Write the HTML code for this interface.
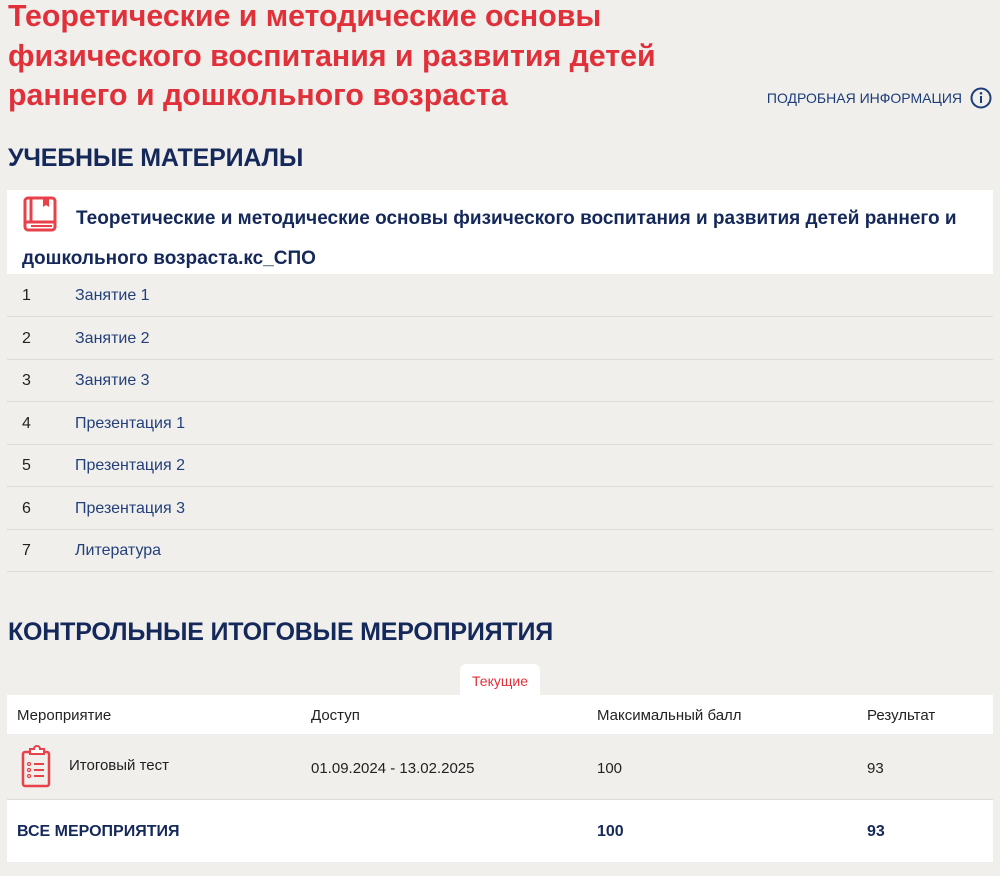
<!DOCTYPE html>
<html><head><meta charset="utf-8"><style>
*{margin:0;padding:0;box-sizing:border-box}
body{width:1000px;height:876px;background:#f0efec;font-family:"Liberation Sans",sans-serif;position:relative;overflow:hidden;color:#222}
.t{position:absolute;left:8px;top:-3px;color:#e0313b;font-weight:bold;font-size:30.3px;line-height:39.5px;width:680px}
.info{position:absolute;right:8px;top:87px;color:#1c3d78;font-size:14px;display:flex;align-items:center;gap:8px}
h2{position:absolute;left:8px;color:#15285a;font-size:25px;font-weight:bold;letter-spacing:-0.2px}
.card{position:absolute;left:7px;width:986px;top:190px;height:84px;background:#fff;color:#15285a;font-weight:bold;font-size:19px;line-height:40px;padding:6px 14px 0 15px}
.row{position:absolute;left:7px;width:986px;height:43px;border-bottom:1px solid #dcdbd8;font-size:16px;line-height:43px}
.row span{position:absolute;left:15px}
.row a{position:absolute;left:68px;color:#23407a;text-decoration:none}
.tab{position:absolute;left:460px;top:664px;width:80px;height:32px;background:#fff;border-radius:6px 6px 0 0;color:#e0313b;font-size:14px;text-align:center;line-height:34px}
.tr{position:absolute;left:7px;width:986px;font-size:15px}
.tr div{position:absolute}
</style></head><body>
<div class="t">Теоретические и методические основы физического воспитания и развития детей раннего и дошкольного возраста</div>
<div class="info">ПОДРОБНАЯ ИНФОРМАЦИЯ <svg width="22" height="22" viewBox="0 0 22 22"><circle cx="11" cy="11" r="9.5" fill="none" stroke="#1c3d78" stroke-width="2"/><rect x="10" y="9" width="2" height="7" fill="#1c3d78"/><circle cx="11" cy="6.3" r="1.3" fill="#1c3d78"/></svg></div>
<h2 style="top:144px">УЧЕБНЫЕ МАТЕРИАЛЫ</h2>
<div class="card"><svg width="36" height="36" viewBox="0 0 36 36" style="vertical-align:-8px;margin-right:18px"><rect x="3" y="2" width="30" height="32" rx="3" fill="none" stroke="#e8414a" stroke-width="3"/><line x1="9" y1="2" x2="9" y2="26" stroke="#e8414a" stroke-width="3"/><line x1="3" y1="26" x2="33" y2="26" stroke="#e8414a" stroke-width="3"/><line x1="9" y1="30" x2="30" y2="30" stroke="#e8414a" stroke-width="2"/><path d="M21 2v9l3-2 3 2V2z" fill="#e8414a"/></svg>Теоретические и методические основы физического воспитания и развития детей раннего и дошкольного возраста.кс_СПО</div>
<div class="row" style="top:274px"><span>1</span><a>Занятие 1</a></div>
<div class="row" style="top:317px"><span>2</span><a>Занятие 2</a></div>
<div class="row" style="top:359px"><span>3</span><a>Занятие 3</a></div>
<div class="row" style="top:402px"><span>4</span><a>Презентация 1</a></div>
<div class="row" style="top:444px"><span>5</span><a>Презентация 2</a></div>
<div class="row" style="top:487px"><span>6</span><a>Презентация 3</a></div>
<div class="row" style="top:529px"><span>7</span><a>Литература</a></div>
<h2 style="top:618px">КОНТРОЛЬНЫЕ ИТОГОВЫЕ МЕРОПРИЯТИЯ</h2>
<div class="tab">Текущие</div>
<div class="tr" style="top:695px;height:39px;background:#fff;line-height:42px"><div style="left:10px">Мероприятие</div><div style="left:304px">Доступ</div><div style="left:590px">Максимальный балл</div><div style="left:860px">Результат</div></div>
<div class="tr" style="top:734px;height:66px;border-bottom:1px solid #dcdbd8">
<div style="left:13px;top:11px"><svg width="34" height="44" viewBox="0 0 34 44"><rect x="3" y="7" width="26" height="34" rx="2" fill="none" stroke="#e8414a" stroke-width="2.5"/><path d="M10 7V4h4a3 3 0 0 1 6 0h4v5H10z" fill="#fff" stroke="#e8414a" stroke-width="2"/><circle cx="9" cy="19" r="1.5" fill="none" stroke="#e8414a" stroke-width="1.3"/><circle cx="9" cy="25" r="1.5" fill="none" stroke="#e8414a" stroke-width="1.3"/><circle cx="9" cy="31" r="1.5" fill="none" stroke="#e8414a" stroke-width="1.3"/><path d="M14 19h10M14 25h10M14 31h10" stroke="#e8414a" stroke-width="2"/></svg></div>
<div style="left:62px;top:23px">Итоговый тест</div><div style="left:304px;top:26px">01.09.2024 - 13.02.2025</div><div style="left:590px;top:26px">100</div><div style="left:860px;top:26px">93</div></div>
<div class="tr" style="top:800px;height:62px;background:#fff;color:#15285a;font-weight:bold;font-size:16px;line-height:64px"><div style="left:10px">ВСЕ МЕРОПРИЯТИЯ</div><div style="left:590px">100</div><div style="left:860px">93</div></div>
</body></html>
